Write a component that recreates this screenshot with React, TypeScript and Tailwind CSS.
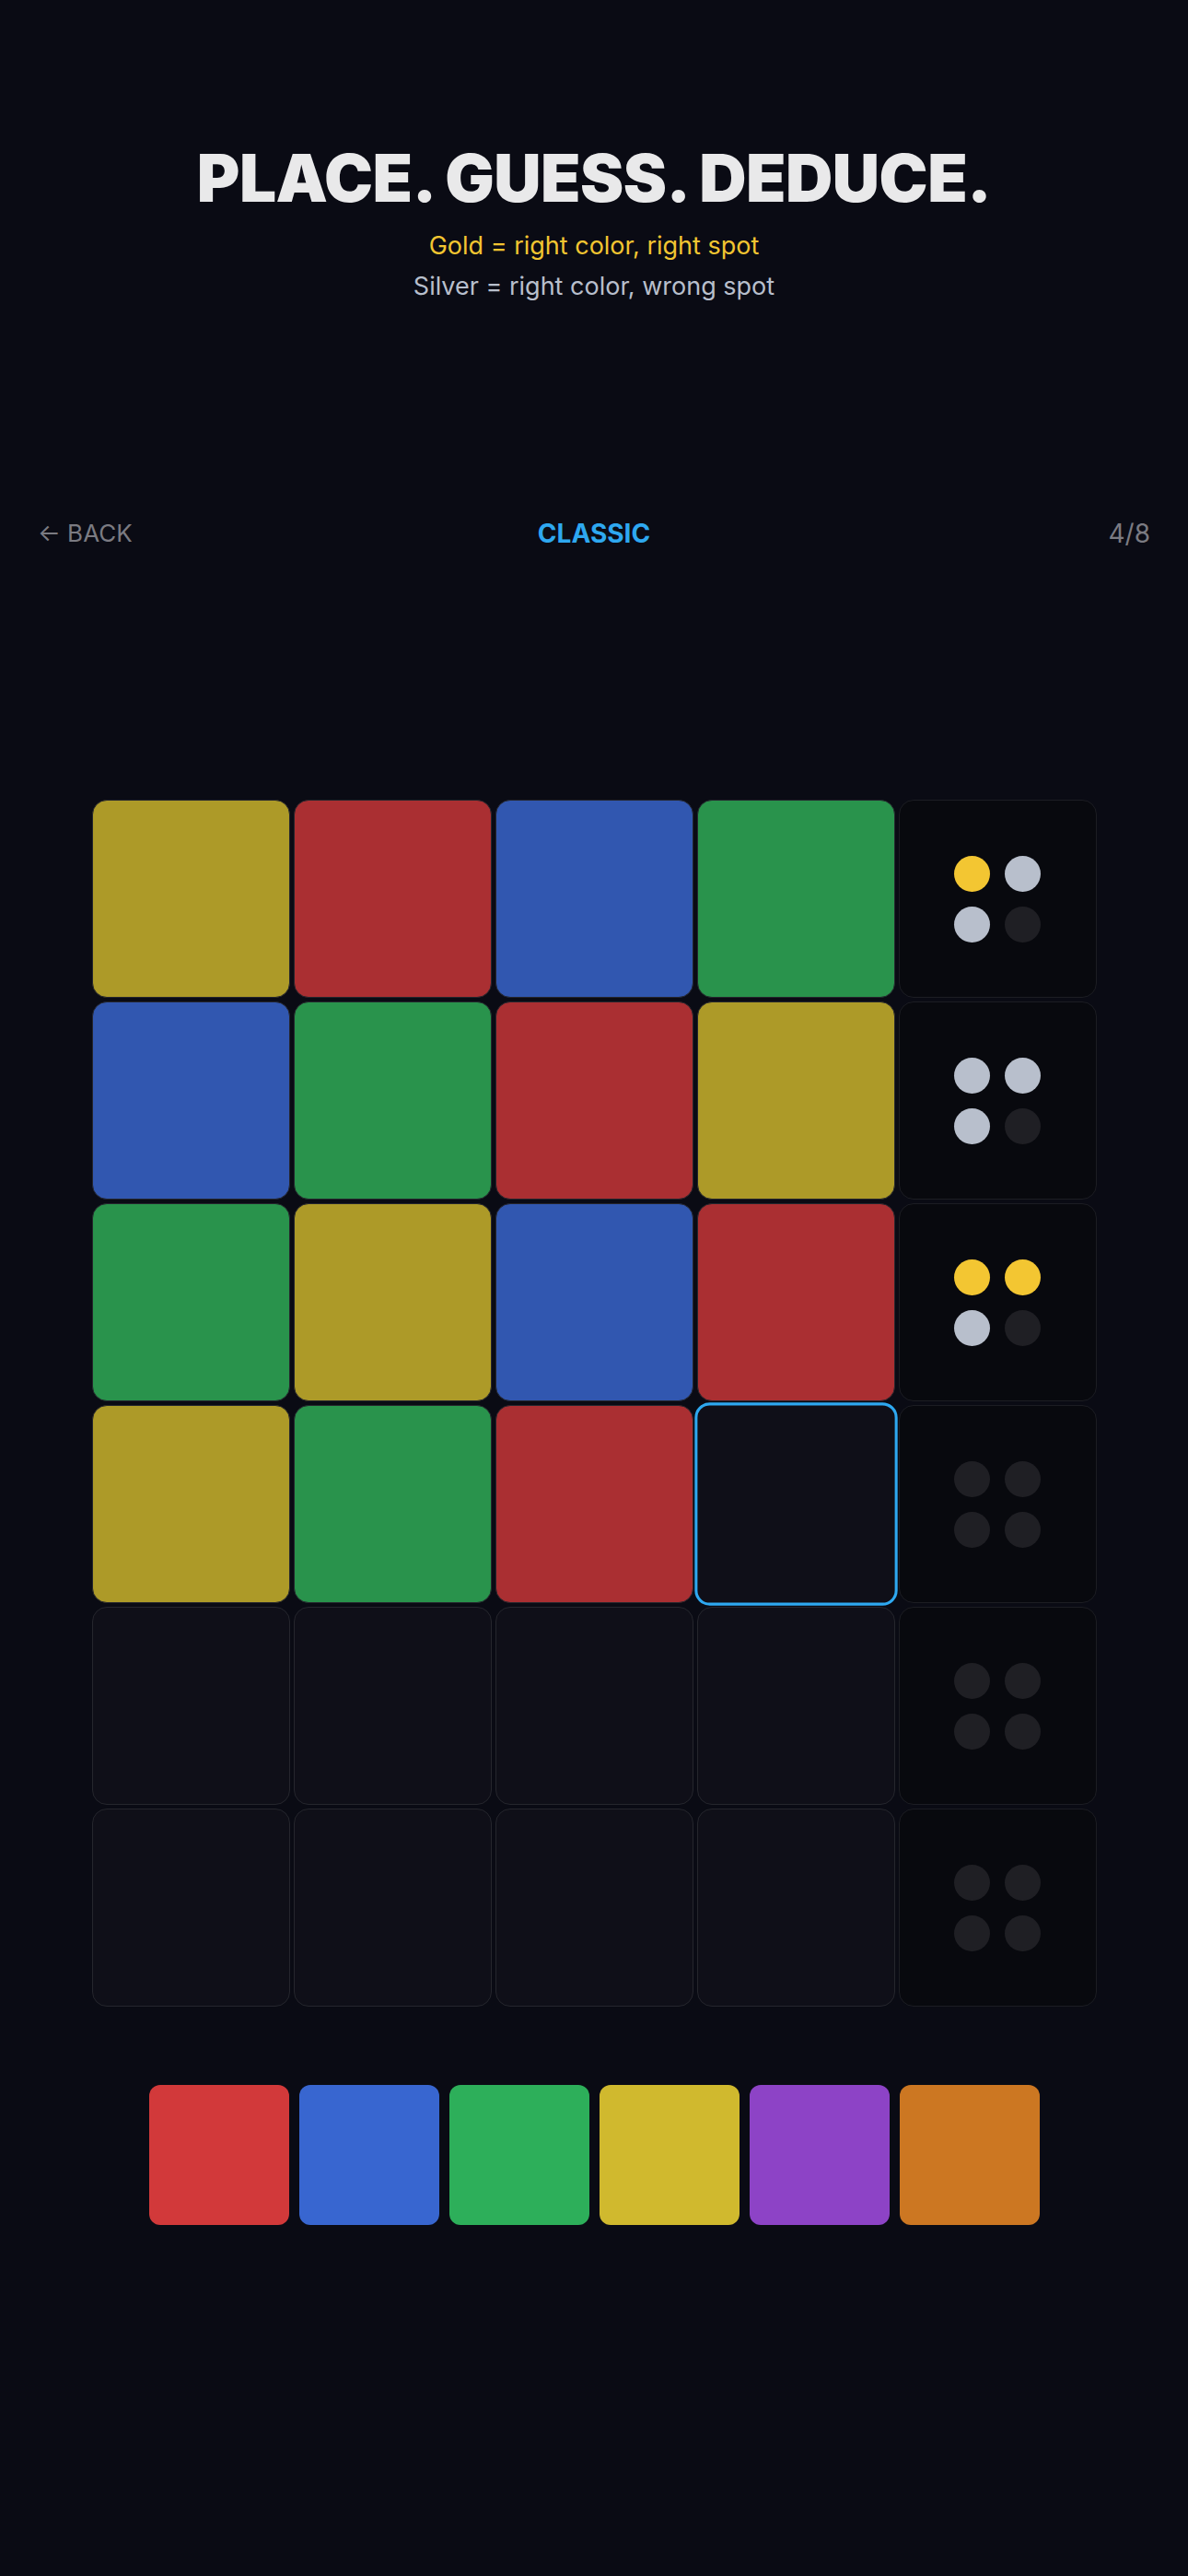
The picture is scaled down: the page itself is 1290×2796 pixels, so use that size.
import React from "react";

type Peg = "gold" | "silver" | "none";

const CELL: Record<string, string> = {
  Y: "bg-[#ad9a28]",
  R: "bg-[#aa2f32]",
  B: "bg-[#3157b0]",
  G: "bg-[#29934c]",
};

const rows: { guess: (string | null)[]; pegs: Peg[] }[] = [
  { guess: ["Y", "R", "B", "G"], pegs: ["gold", "silver", "silver", "none"] },
  { guess: ["B", "G", "R", "Y"], pegs: ["silver", "silver", "silver", "none"] },
  { guess: ["G", "Y", "B", "R"], pegs: ["gold", "gold", "silver", "none"] },
  { guess: ["Y", "G", "R", null], pegs: ["none", "none", "none", "none"] },
  { guess: [null, null, null, null], pegs: ["none", "none", "none", "none"] },
  { guess: [null, null, null, null], pegs: ["none", "none", "none", "none"] },
];

const PALETTE = ["bg-[#d2393a]", "bg-[#3866d0]", "bg-[#2daf5a]", "bg-[#d0b92e]", "bg-[#8d43c6]", "bg-[#cc7722]"];

const pegClass = (p: Peg) => {
  if (p === "gold") return "bg-[#f3c632]";
  if (p === "silver") return "bg-[#b8bfcc]";
  return "bg-[#1f1f24]";
};

const FeedbackCell = ({ pegs }: { pegs: Peg[] }) => (
  <div className="h-[215px] rounded-[16px] border border-[#1c1d23] bg-[#08090e] flex items-center justify-center">
    <div className="grid grid-cols-2 gap-[16px]">
      {pegs.map((p, i) => (
        <div key={i} className={`w-[39px] h-[39px] rounded-full ${pegClass(p)}`} />
      ))}
    </div>
  </div>
);

export default function App() {
  return (
    <div
      className="min-h-[2796px] w-full bg-[#0a0b14] flex flex-col items-center pt-[158px]"
      style={{ fontFamily: "Inter, 'Noto Sans', sans-serif" }}
    >
      {/* header */}
      <h1 className="text-[71px] leading-none font-black tracking-[-0.5px] text-[#e9e9ea]">
        PLACE. GUESS. DEDUCE.
      </h1>
      <p className="mt-[16px] text-[27px] leading-[44px] text-[#f2c531]">Gold = right color, right spot</p>
      <p className="text-[27px] leading-[44px] text-[#b8bfcc]">Silver = right color, wrong spot</p>

      {/* nav */}
      <div className="mt-[224px] w-full px-[41px] flex items-center justify-between leading-[44px]">
        <div className="w-[120px] text-[26px] text-[#7b7b82]">← BACK</div>
        <div className="text-[28px] font-bold text-[#2ea8f0]">CLASSIC</div>
        <div className="w-[120px] text-[28px] text-right text-[#7b7b82]">4/8</div>
      </div>

      {/* board */}
      <div className="mt-[267px] w-[1091px] grid grid-cols-5 gap-[4px]">
        {rows.map((row, ri) => (
          <React.Fragment key={ri}>
            {row.guess.map((c, ci) => {
              const active = ri === 3 && ci === 3;
              if (active) {
                return (
                  <div
                    key={ci}
                    className="h-[215px] rounded-[16px] border-[3px] border-[#2ea8f0] bg-[#0f0f18] scale-[1.025]"
                  />
                );
              }
              return (
                <div
                  key={ci}
                  className={`h-[215px] rounded-[16px] border border-[#25262d] ${c ? CELL[c] : "bg-[#0f0f18]"}`}
                />
              );
            })}
            <FeedbackCell pegs={row.pegs} />
          </React.Fragment>
        ))}
      </div>

      {/* palette */}
      <div className="mt-[85px] flex gap-[11px]">
        {PALETTE.map((c, i) => (
          <div key={i} className={`w-[152px] h-[152px] rounded-[12px] ${c}`} />
        ))}
      </div>
    </div>
  );
}
